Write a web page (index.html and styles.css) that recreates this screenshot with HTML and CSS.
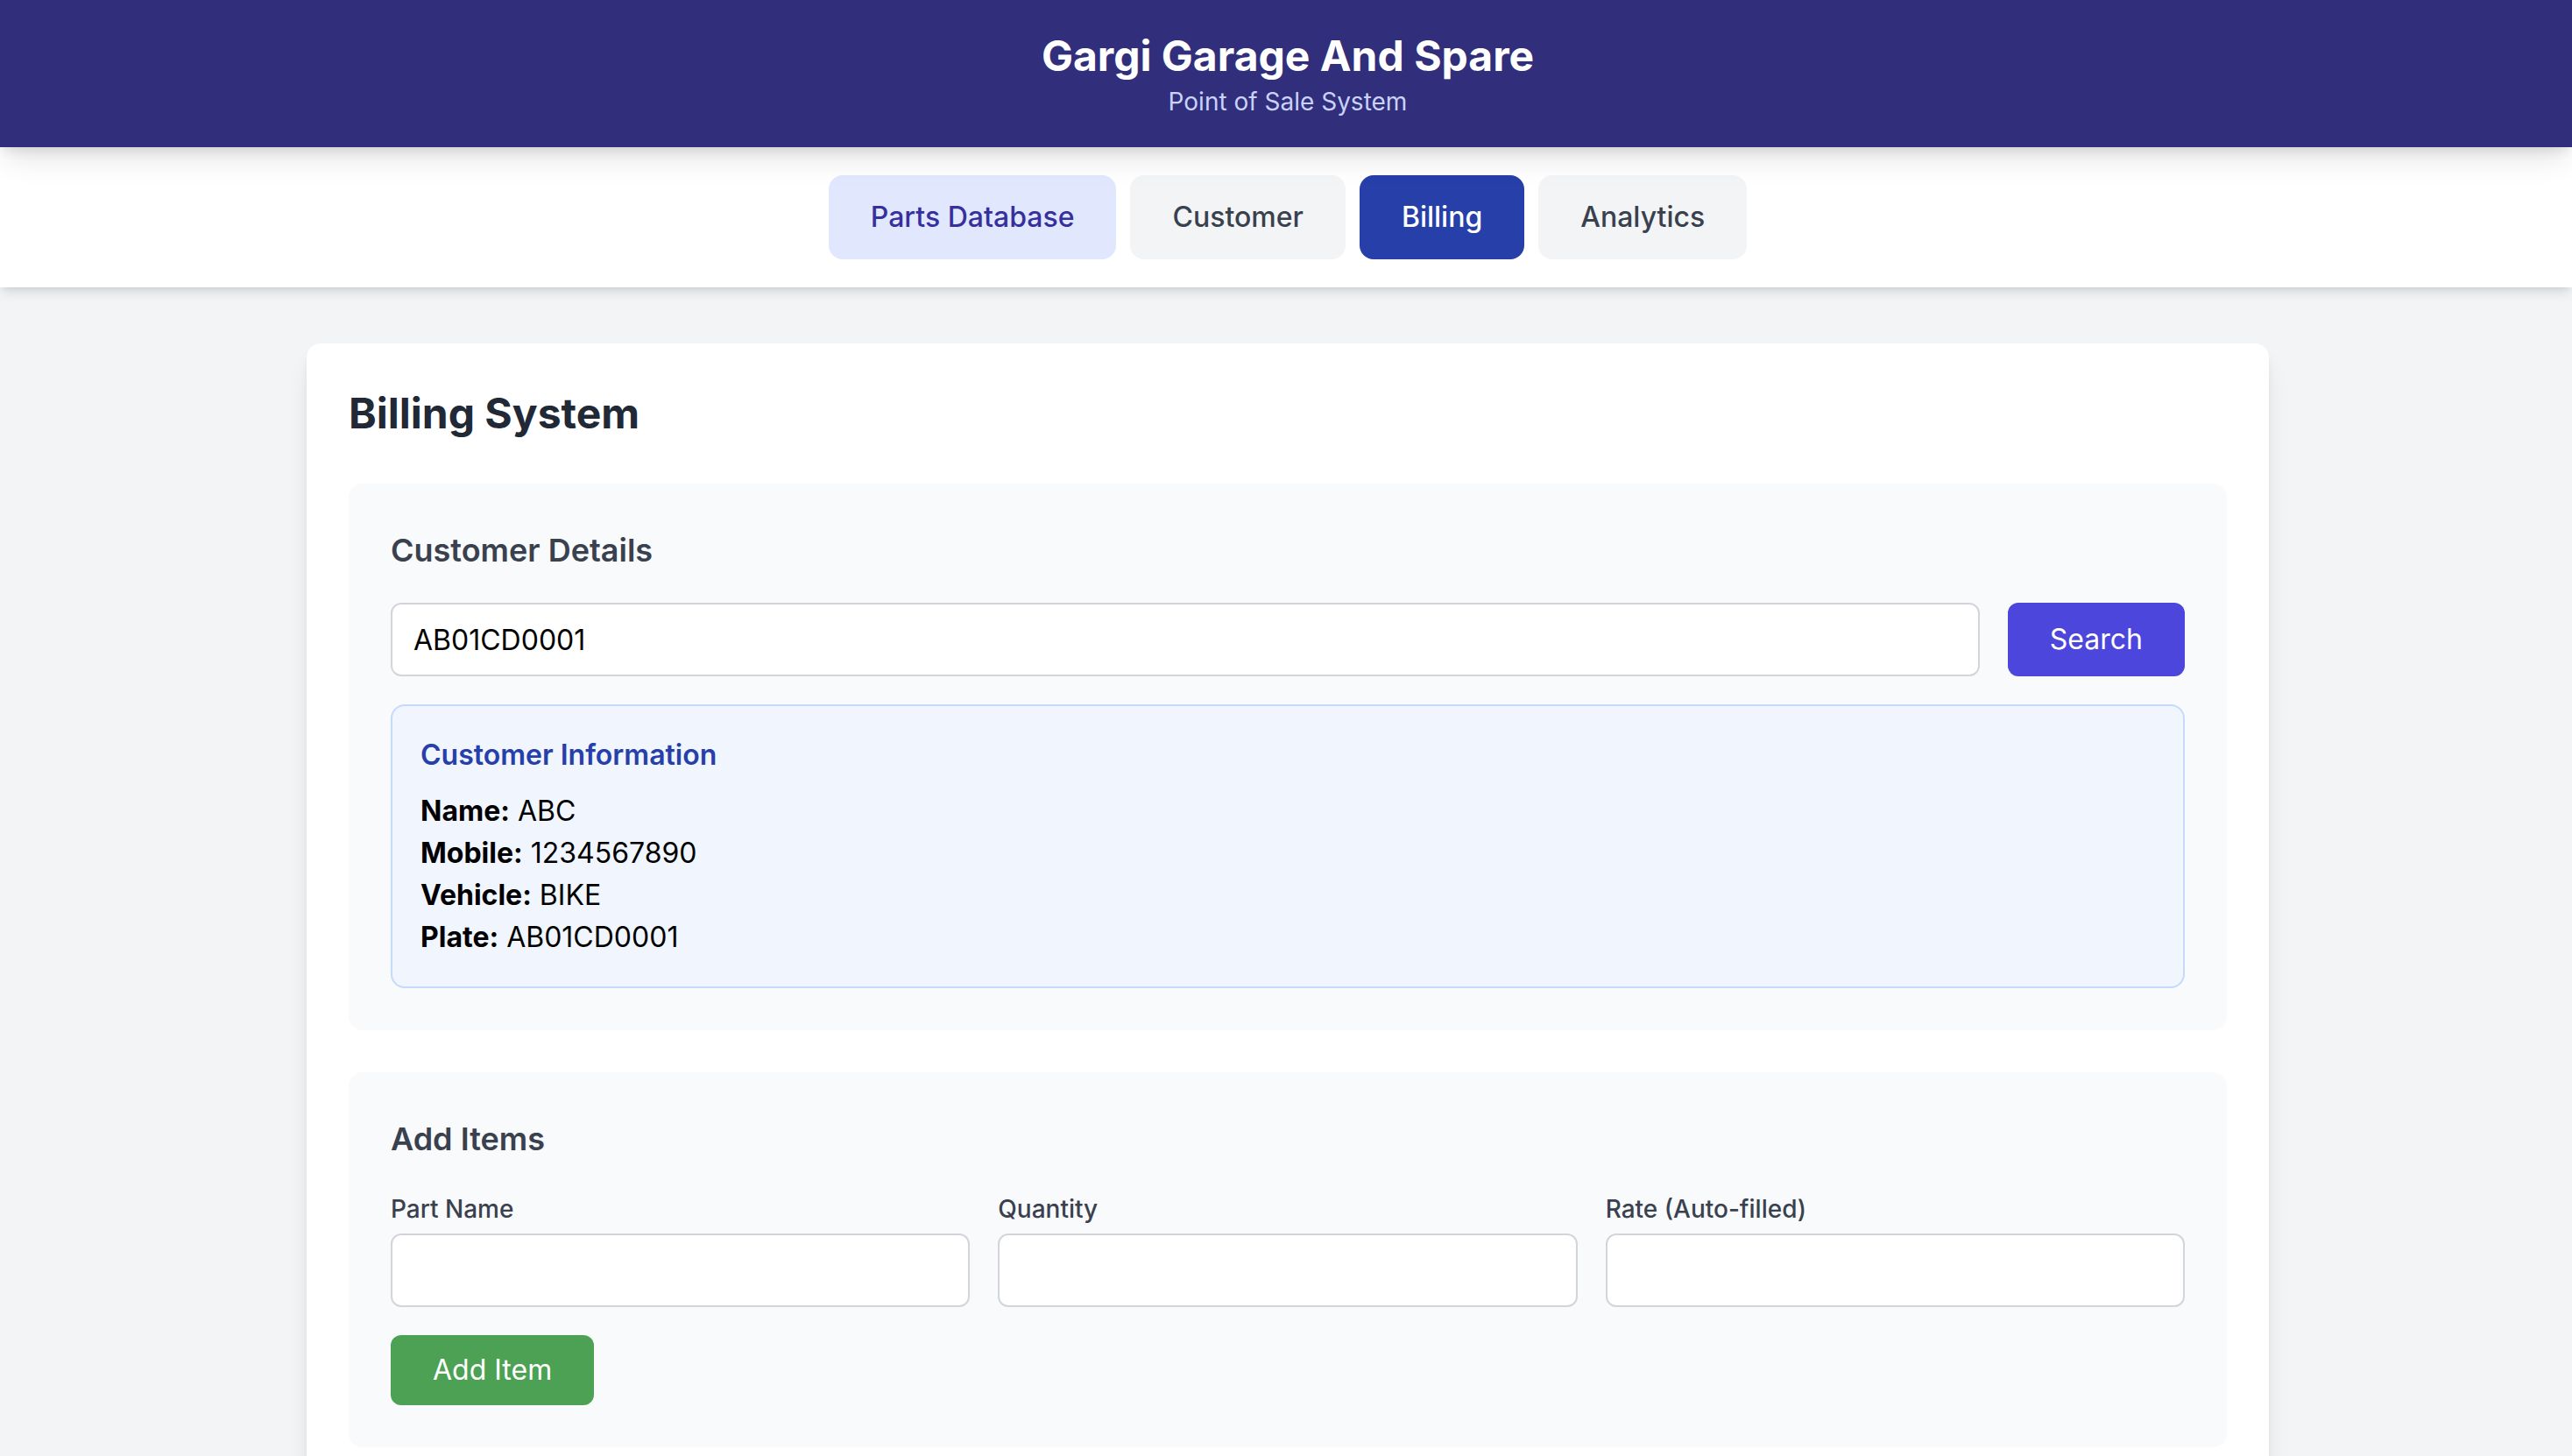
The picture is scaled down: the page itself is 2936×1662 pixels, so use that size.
FILE: index.html
```html
<!DOCTYPE html>
<html lang="en">
<head>
  <meta charset="utf-8">
  <meta name="viewport" content="width=device-width, initial-scale=1">
  <title>Gargi Garage And Spare</title>
  <link rel="stylesheet" href="styles.css">
</head>
<body>
  <header class="site-header">
    <h1 class="site-title">Gargi Garage And Spare</h1>
    <p class="site-subtitle">Point of Sale System</p>
  </header>

  <nav class="tabs" aria-label="Sections">
    <button class="tab tab-highlight" type="button">Parts Database</button>
    <button class="tab" type="button">Customer</button>
    <button class="tab tab-active" type="button" aria-current="page">Billing</button>
    <button class="tab" type="button">Analytics</button>
  </nav>

  <main class="page">
    <div class="card">
      <h2 class="card-title">Billing System</h2>

      <section class="panel">
        <h3 class="panel-title">Customer Details</h3>
        <form class="search-row">
          <input class="input" type="text" value="AB01CD0001" aria-label="Plate number">
          <button class="button button-primary" type="button">Search</button>
        </form>
        <div class="info">
          <h4 class="info-title">Customer Information</h4>
          <p><strong>Name:</strong> ABC</p>
          <p><strong>Mobile:</strong> 1234567890</p>
          <p><strong>Vehicle:</strong> BIKE</p>
          <p><strong>Plate:</strong> AB01CD0001</p>
        </div>
      </section>

      <section class="panel">
        <h3 class="panel-title">Add Items</h3>
        <form>
          <div class="fields">
            <div class="field">
              <label class="label" for="part-name">Part Name</label>
              <input class="input" id="part-name" type="text">
            </div>
            <div class="field">
              <label class="label" for="quantity">Quantity</label>
              <input class="input" id="quantity" type="text" inputmode="numeric">
            </div>
            <div class="field">
              <label class="label" for="rate">Rate (Auto-filled)</label>
              <input class="input" id="rate" type="text" readonly>
            </div>
          </div>
          <button class="button button-success" type="button">Add Item</button>
        </form>
      </section>
    </div>
  </main>
</body>
</html>
```
FILE: styles.css
```css
*,
*::before,
*::after {
  box-sizing: border-box;
}

body {
  margin: 0;
  background: #f3f4f6;
  color: #000;
  font-family: Inter, "Liberation Sans", sans-serif;
  font-size: 32px;
  line-height: 48px;
}

h1, h2, h3, h4, p {
  margin: 0;
}

button, input {
  font: inherit;
}

/* Header */
.site-header {
  position: relative;
  z-index: 1;
  padding: 32px 28px 32px 32px;
  background: #312e7b;
  color: #fff;
  text-align: center;
  box-shadow: 0 20px 30px -6px rgba(0, 0, 0, 0.1), 0 8px 12px -4px rgba(0, 0, 0, 0.1);
}

.site-title {
  font-size: 48px;
  line-height: 64px;
  font-weight: 700;
}

.site-subtitle {
  color: #c9d2fa;
  font-size: 28px;
  line-height: 40px;
}

/* Navigation */
.tabs {
  display: flex;
  flex-wrap: wrap;
  justify-content: center;
  gap: 16px;
  padding: 32px 28px 32px 32px;
  background: #fff;
  box-shadow: 0 8px 12px -2px rgba(0, 0, 0, 0.1), 0 4px 8px -4px rgba(0, 0, 0, 0.1);
}

.tab {
  padding: 24px 48px;
  border: 0;
  border-radius: 16px;
  background: #f3f4f6;
  color: #39414f;
  font-weight: 500;
  cursor: pointer;
}

.tab-highlight {
  background: #e1e7fd;
  color: #36309d;
}

.tab-active {
  background: #263fa9;
  color: #fff;
}

/* Page */
.page {
  max-width: 2308px;
  margin: 0 auto;
  padding: 64px 32px 64px 36px;
}

.card {
  padding: 48px;
  border-radius: 16px;
  background: #fff;
  box-shadow: 0 20px 30px -6px rgba(0, 0, 0, 0.1), 0 8px 12px -4px rgba(0, 0, 0, 0.1);
}

.card-title {
  margin-bottom: 48px;
  color: #212936;
  font-size: 48px;
  line-height: 64px;
  font-weight: 700;
}

.panel {
  margin-bottom: 48px;
  padding: 48px;
  border-radius: 16px;
  background: #f9fafb;
}

.panel-title {
  margin-bottom: 32px;
  color: #39414f;
  font-size: 36px;
  line-height: 56px;
  font-weight: 600;
}

/* Controls */
.input {
  width: 100%;
  height: 84px;
  padding: 16px 24px;
  border: 2px solid #d2d5da;
  border-radius: 12px;
  background: #fff;
  color: #000;
}

.button {
  padding: 16px 48px;
  border: 0;
  border-radius: 12px;
  color: #fff;
  cursor: pointer;
}

.button-primary {
  background: #4d46dc;
}

.button-success {
  background: #4ca154;
}

.search-row {
  display: flex;
  gap: 32px;
  margin-bottom: 32px;
}

.search-row .input {
  flex: 1;
  min-width: 0;
}

.fields {
  display: grid;
  grid-template-columns: repeat(3, 1fr);
  gap: 32px;
  margin-bottom: 32px;
}

.label {
  display: block;
  margin-bottom: 8px;
  color: #39414f;
  font-size: 28px;
  line-height: 40px;
  font-weight: 500;
}

/* Customer information */
.info {
  padding: 32px;
  border: 2px solid #c4dafb;
  border-radius: 16px;
  background: #f1f5fe;
}

.info-title {
  margin-bottom: 16px;
  color: #263fa9;
  font-size: 32px;
  font-weight: 600;
}
```
